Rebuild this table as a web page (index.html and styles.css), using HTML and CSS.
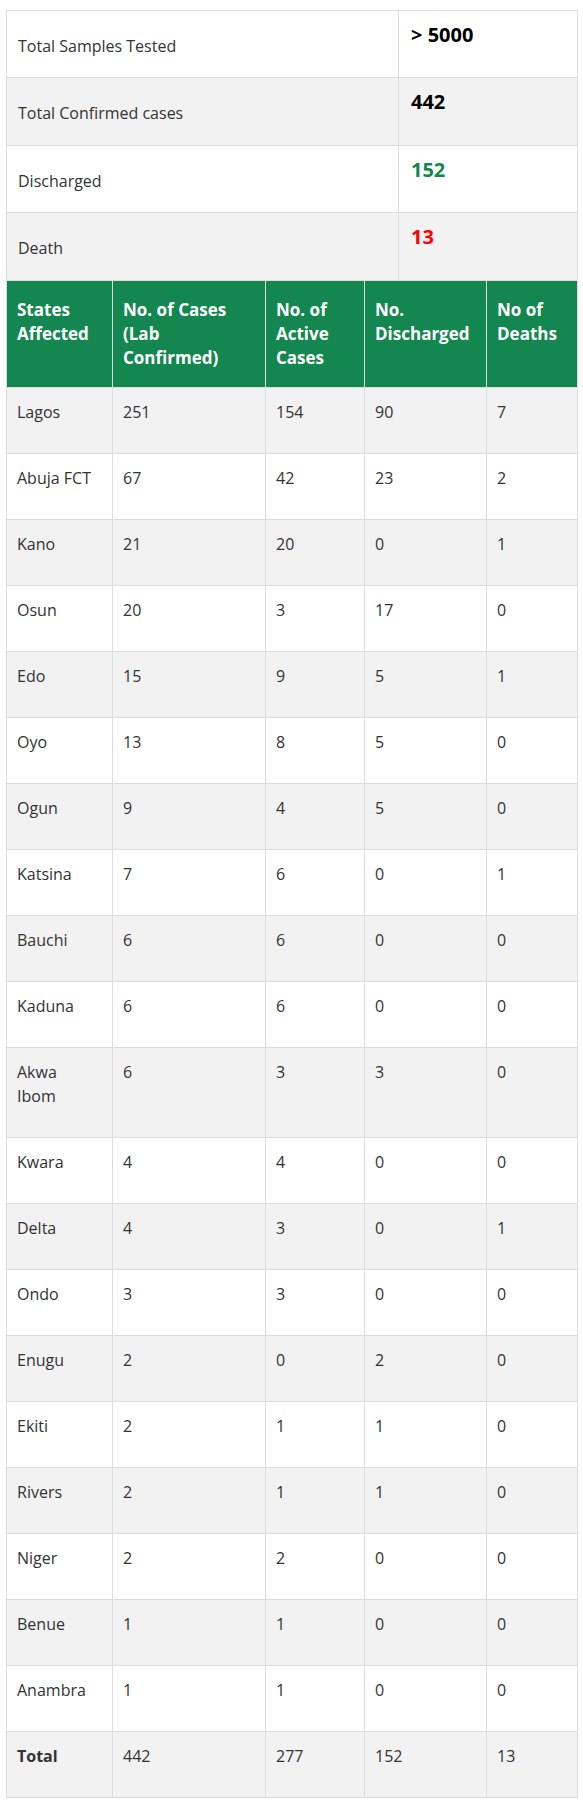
FILE: index.html
```html
<!DOCTYPE html>
<html lang="en">
<head>
<meta charset="utf-8">
<title>COVID-19 Nigeria</title>
<link rel="stylesheet" href="styles.css">
</head>
<body>
<div class="wrap">
  <table class="summary">
    <colgroup><col class="c-label"><col class="c-value"></colgroup>
    <tbody>
      <tr class="r-a"><td class="label">Total Samples Tested</td><td class="value">&gt; 5000</td></tr>
      <tr class="r-b alt"><td class="label">Total Confirmed cases</td><td class="value">442</td></tr>
      <tr class="r-a"><td class="label">Discharged</td><td class="value green">152</td></tr>
      <tr class="r-b alt"><td class="label">Death</td><td class="value red">13</td></tr>
    </tbody>
  </table>
  <table class="states">
    <colgroup>
      <col class="c1"><col class="c2"><col class="c3"><col class="c4"><col class="c5">
    </colgroup>
    <thead>
      <tr>
        <th>States Affected</th>
        <th>No. of Cases (Lab Confirmed)</th>
        <th>No. of Active Cases</th>
        <th>No. Discharged</th>
        <th>No of Deaths</th>
      </tr>
    </thead>
    <tbody>
      <tr class="alt"><td>Lagos</td><td>251</td><td>154</td><td>90</td><td>7</td></tr>
      <tr><td>Abuja FCT</td><td>67</td><td>42</td><td>23</td><td>2</td></tr>
      <tr class="alt"><td>Kano</td><td>21</td><td>20</td><td>0</td><td>1</td></tr>
      <tr><td>Osun</td><td>20</td><td>3</td><td>17</td><td>0</td></tr>
      <tr class="alt"><td>Edo</td><td>15</td><td>9</td><td>5</td><td>1</td></tr>
      <tr><td>Oyo</td><td>13</td><td>8</td><td>5</td><td>0</td></tr>
      <tr class="alt"><td>Ogun</td><td>9</td><td>4</td><td>5</td><td>0</td></tr>
      <tr><td>Katsina</td><td>7</td><td>6</td><td>0</td><td>1</td></tr>
      <tr class="alt"><td>Bauchi</td><td>6</td><td>6</td><td>0</td><td>0</td></tr>
      <tr><td>Kaduna</td><td>6</td><td>6</td><td>0</td><td>0</td></tr>
      <tr class="alt"><td>Akwa Ibom</td><td>6</td><td>3</td><td>3</td><td>0</td></tr>
      <tr><td>Kwara</td><td>4</td><td>4</td><td>0</td><td>0</td></tr>
      <tr class="alt"><td>Delta</td><td>4</td><td>3</td><td>0</td><td>1</td></tr>
      <tr><td>Ondo</td><td>3</td><td>3</td><td>0</td><td>0</td></tr>
      <tr class="alt"><td>Enugu</td><td>2</td><td>0</td><td>2</td><td>0</td></tr>
      <tr><td>Ekiti</td><td>2</td><td>1</td><td>1</td><td>0</td></tr>
      <tr class="alt"><td>Rivers</td><td>2</td><td>1</td><td>1</td><td>0</td></tr>
      <tr><td>Niger</td><td>2</td><td>2</td><td>0</td><td>0</td></tr>
      <tr class="alt"><td>Benue</td><td>1</td><td>1</td><td>0</td><td>0</td></tr>
      <tr><td>Anambra</td><td>1</td><td>1</td><td>0</td><td>0</td></tr>
      <tr class="alt total"><td><strong>Total</strong></td><td>442</td><td>277</td><td>152</td><td>13</td></tr>
    </tbody>
  </table>
</div>
</body>
</html>
```

FILE: styles.css
```css
html, body {
  margin: 0;
  padding: 0;
  background: #ffffff;
}

body {
  font-family: "Open Sans", "Noto Sans", sans-serif;
  font-size: 16px;
  line-height: 24px;
  color: #333333;
}

.wrap {
  padding: 10px 0 0 6px;
}

table {
  border-collapse: collapse;
  table-layout: fixed;
  width: 571px;
}

td, th {
  border: 1px solid #dddddd;
  vertical-align: top;
  text-align: left;
}

/* summary table */
.c-label { width: 392px; }
.c-value { width: 179px; }

.summary td.label {
  padding: 23px 10px 19px 11px;
}

.summary td.value {
  padding: 12px 12px 30px 12px;
  font-size: 20px;
  font-weight: 700;
  color: #000000;
}

.summary tr.r-b td.label { padding-bottom: 20px; }
.summary tr.r-b td.value { padding-bottom: 31px; }

.summary .alt td { background: #f2f2f2; }

.summary td.value.green { color: #13874f; }
.summary td.value.red { color: #ff0000; }

/* states table */
.c1 { width: 106px; }
.c2 { width: 153px; }
.c3 { width: 99px; }
.c4 { width: 122px; }
.c5 { width: 91px; }

.states th {
  background: #13874f;
  color: #ffffff;
  font-size: 17px;
  font-weight: 700;
  padding: 17px 10px 17px 10px;
  border-top: 0;
}

.states td {
  padding: 12px 10px 29px 10px;
}

.states td:first-child {
  padding-right: 16px;
}

.states tr.alt td { background: #f2f2f2; }

.states strong { font-weight: 700; }
```
